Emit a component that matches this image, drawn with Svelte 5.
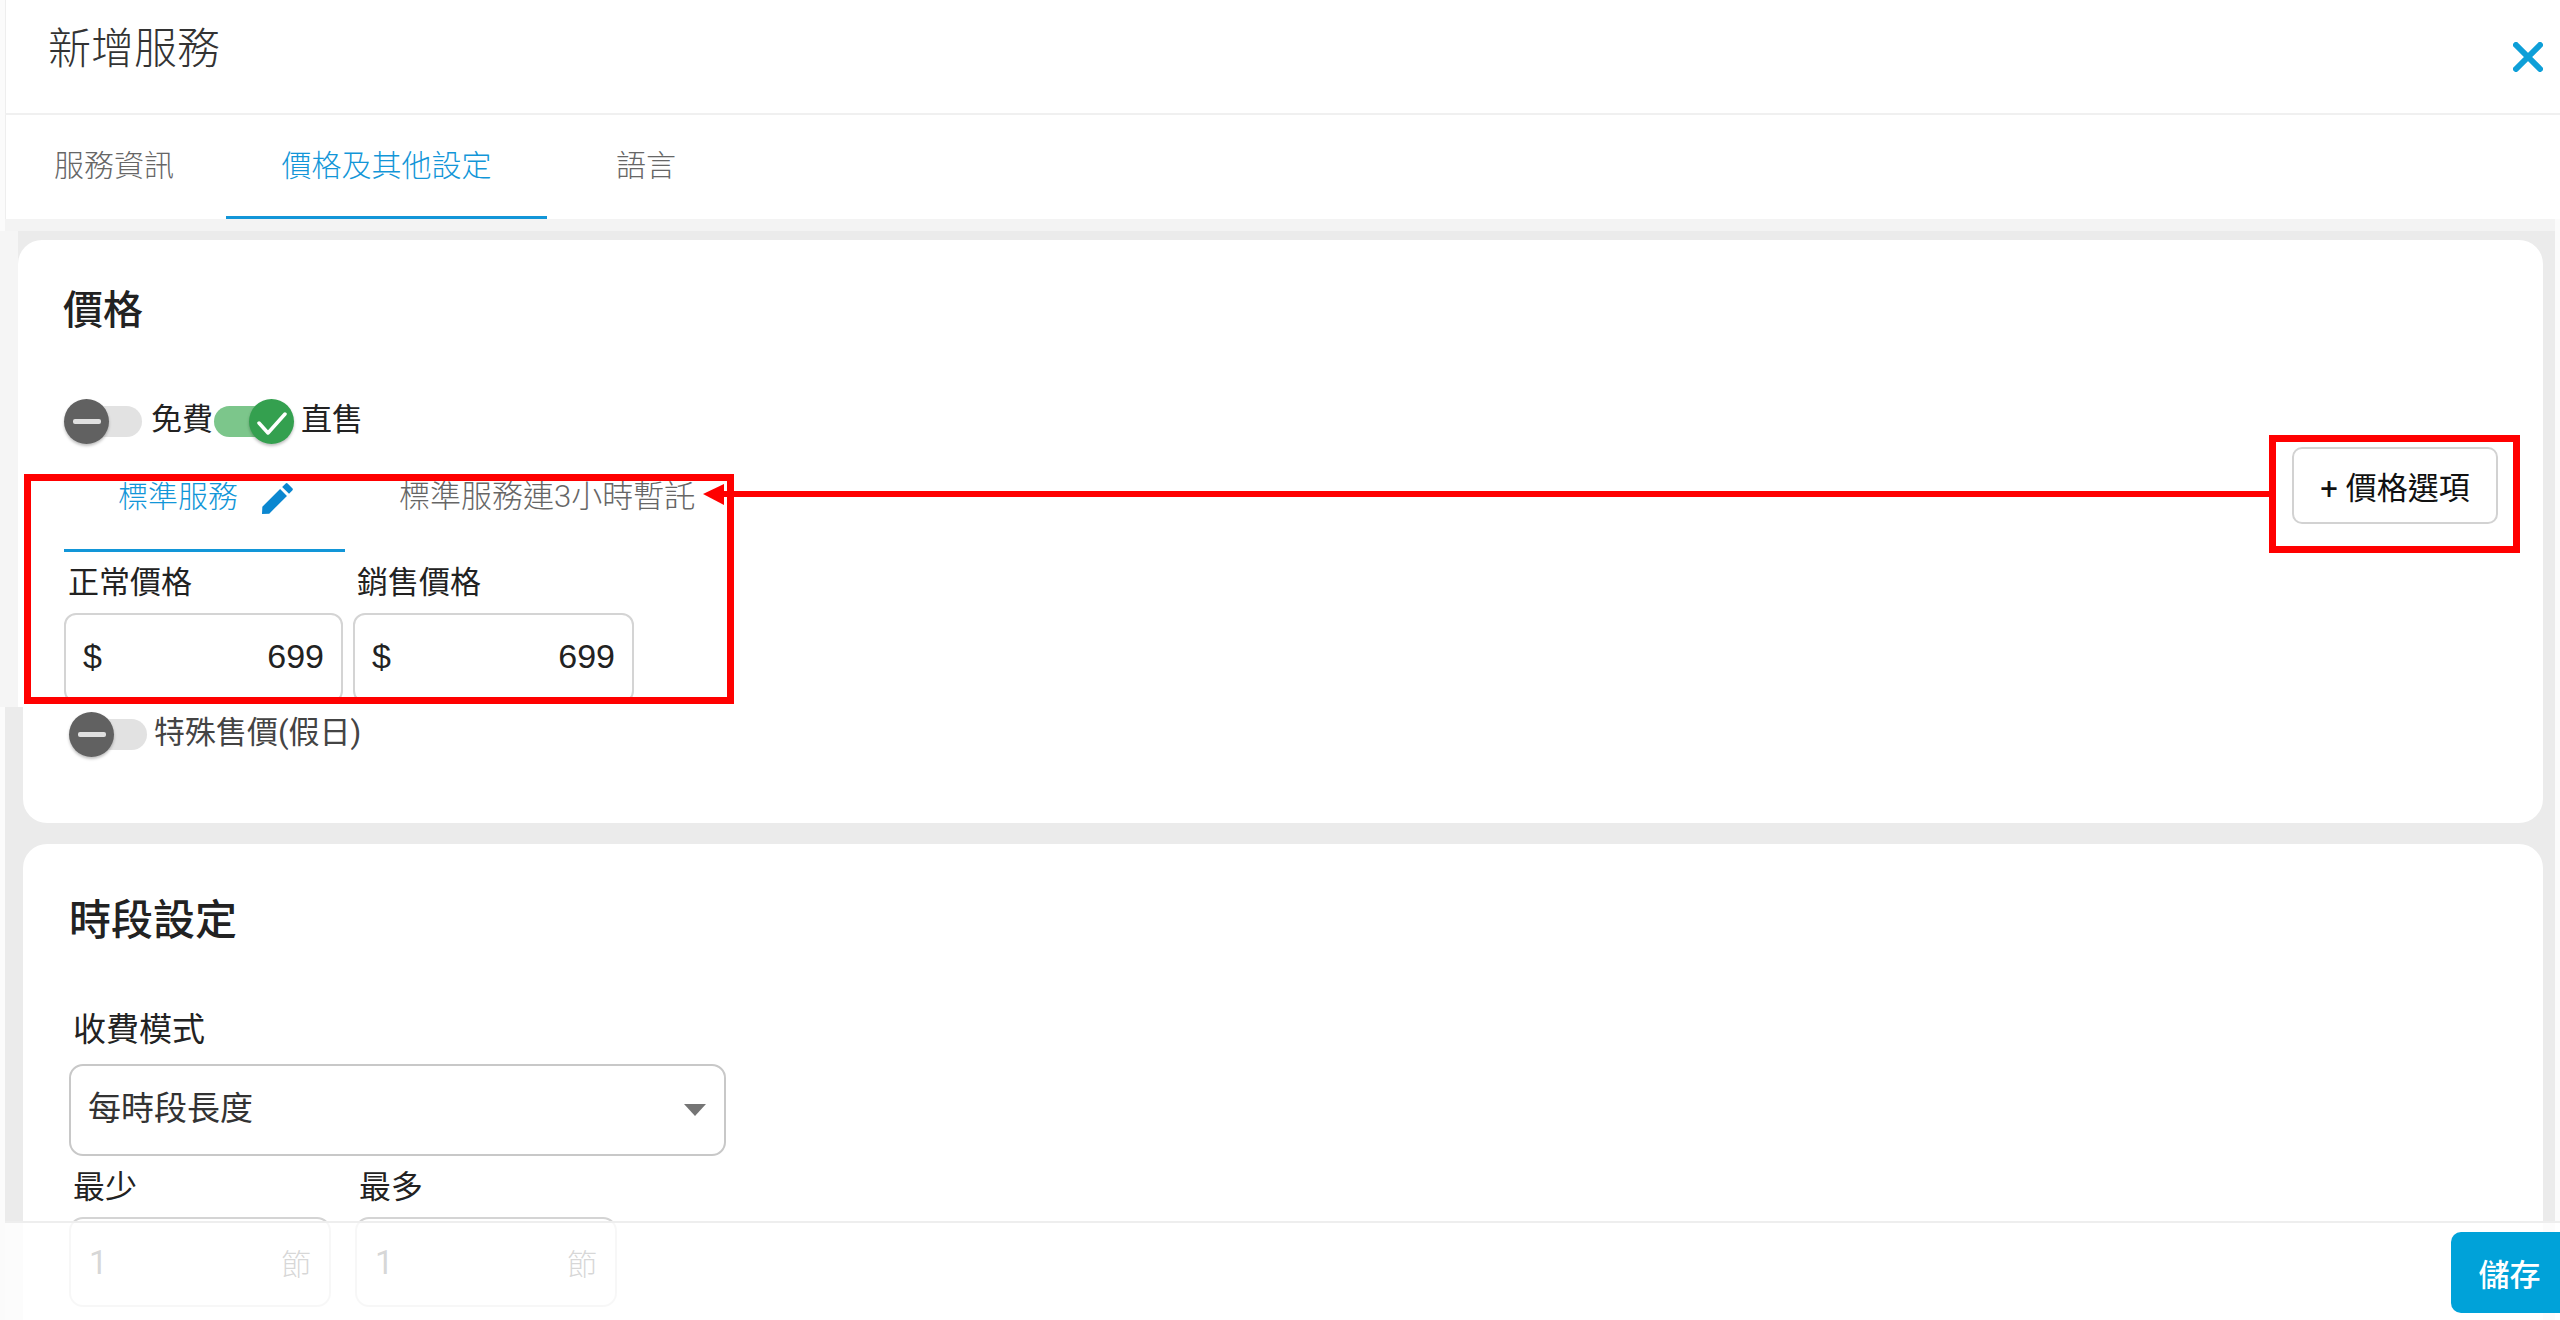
<script>
    const tabs = [
        { label: '服務資訊' },
        { label: '價格及其他設定', active: true },
        { label: '語言' }
    ];
    const prices = [
        { label: '正常價格', value: '699' },
        { label: '銷售價格', value: '699' }
    ];
    const limits = ['最少', '最多'];
</script>

{#snippet toggle(on)}
    <span class="toggle {on ? 'toggle-on' : 'toggle-off'}">
        <span class="track"></span>
        <span class="knob">
            {#if on}
                <svg viewBox="0 0 30 30" width="30" height="30" fill="none" stroke="#fff" stroke-width="3.5" stroke-linecap="round" stroke-linejoin="round">
                    <path d="M2 16l9 10L28 7" />
                </svg>
            {:else}
                <span class="minus"></span>
            {/if}
        </span>
    </span>
{/snippet}

<div class="page">
    <header class="header">
        <h1>新增服務</h1>
        <svg class="close" viewBox="0 0 30 30" width="30" height="30" fill="none" stroke="#0e9fd8" stroke-width="6" stroke-linecap="round">
            <path d="M3 3l24 24M27 3L3 27" />
        </svg>
    </header>

    <nav class="tabs">
        {#each tabs as tab}
            <span class="tab" class:active={tab.active}>{tab.label}</span>
        {/each}
    </nav>

    <main class="body">
        <section class="card price-card">
            <h2>價格</h2>
            <div class="toggle-row">
                {@render toggle(false)}
                <span class="toggle-label free">免費</span>
                {@render toggle(true)}
                <span class="toggle-label direct">直售</span>
            </div>

            <div class="price-tabs">
                <span class="price-tab active">
                    標準服務
                    <svg class="pencil" viewBox="3 3 18 18" width="31" height="31" fill="#0b87d0">
                        <path d="M3 21l.2-4.200L13.500 6.500l4 4L7.200 20.800 3 21zM14.700 5.300l1.900-1.900a1 1 0 0 1 1.400 0l2.600 2.600a1 1 0 0 1 0 1.400l-1.900 1.900-4-4z" />
                    </svg>
                </span>
                <span class="price-tab wide">標準服務連3小時暫託</span>
            </div>

            <div class="fields">
                {#each prices as price}
                    <div class="field">
                        <div class="field-label">{price.label}</div>
                        <div class="money-input">
                            <span>$</span>
                            <span>{price.value}</span>
                        </div>
                    </div>
                {/each}
            </div>

            <div class="toggle-row special">
                {@render toggle(false)}
                <span class="toggle-label holiday">特殊售價(假日)</span>
            </div>
        </section>

        <section class="card time-card">
            <h2>時段設定</h2>
            <div class="label-lg">收費模式</div>
            <div class="select">
                <span>每時段長度</span>
                <span class="caret"></span>
            </div>
            <div class="limits">
                {#each limits as limit}
                    <div class="limit">
                        <div class="label-lg">{limit}</div>
                        <div class="limit-input">
                            <span>1</span>
                            <span class="unit">節</span>
                        </div>
                    </div>
                {/each}
            </div>
        </section>
    </main>

    <footer class="footer">
        <button class="save">儲存</button>
    </footer>

    <button class="add-price">+ 價格選項</button>

    <!-- lighter strip of the pasted upper capture -->
    <div class="left-strip"></div>

    <!-- red annotation marks on top of the screenshot -->
    <div class="mark mark-tabs"></div>
    <div class="mark mark-button"></div>
    <svg class="arrow" width="2560" height="1320" viewBox="0 0 2560 1320">
        <rect x="722" y="491" width="1548" height="6" fill="#f00" />
        <polygon points="703,494 724,484 724,505" fill="#f00" />
    </svg>
</div>

<style>
    :global(body) {
        margin: 0;
        background: #fff;
    }

    .page {
        position: relative;
        width: 2560px;
        height: 1320px;
        overflow: hidden;
        padding-left: 5px;
        box-sizing: border-box;
        background: #fbfbfb;
        font-family: Roboto, "Noto Sans CJK TC", sans-serif;
        color: #222;
    }

    .header {
        height: 113px;
        display: flex;
        align-items: center;
        justify-content: space-between;
        padding: 0 17px 0 42px;
        background: #fff;
        border-bottom: 2px solid #f0f0f0;
        border-left: 1px solid #eeeeee;
    }

    h1 {
        margin: 0 0 13px;
        font-size: 43px;
        font-weight: 300;
        line-height: 1.2;
        color: #333;
    }

    .tabs {
        height: 104px;
        display: flex;
        background: #fff;
        padding-left: 15px;
        border-left: 1px solid #eeeeee;
    }

    .tab {
        height: 101px;
        display: flex;
        align-items: center;
        justify-content: center;
        font-size: 30px;
        font-weight: 300;
        color: #666;
        line-height: 1;
    }

    .tab:nth-child(1) {
        padding: 0 52px 0 33px;
    }

    .tab:nth-child(2) {
        width: 213px;
        padding: 0 54px;
    }

    .tab:nth-child(3) {
        padding-left: 69px;
    }

    .tab.active {
        color: #1296d8;
        border-bottom: 3px solid #1296d8;
    }

    .body {
        background: #ebebeb;
        border-top: 12px solid #f3f3f3;
        padding: 9px 12px 0 18px;
        margin-right: 5px;
        display: flex;
        flex-direction: column;
        gap: 21px;
    }

    .card {
        position: relative;
        background: #fff;
        border-radius: 24px;
    }

    .price-card {
        padding: 49px 41px 69px;
        height: 583px;
        box-sizing: border-box;
    }

    /* upper part of this card sits 5px further left in the capture */
    .price-card::before {
        content: "";
        position: absolute;
        left: -5px;
        top: 0;
        width: 29px;
        height: 467px;
        background: #fff;
        border-radius: 24px 0 0 0;
    }

    .left-strip {
        position: absolute;
        left: 0;
        top: 231px;
        width: 18px;
        height: 476px;
        background: #f5f5f5;
    }

    .time-card {
        padding: 55px 46px 0;
        height: 500px;
        box-sizing: border-box;
    }

    h2 {
        margin: 0;
        font-size: 40px;
        font-weight: 500;
        line-height: 44px;
        color: #222;
    }

    .price-card h2 {
        margin-left: -1px;
    }

    .toggle-row {
        display: flex;
        align-items: center;
        height: 45px;
        margin-top: 66px;
    }

    .toggle {
        position: relative;
        display: flex;
        align-items: center;
        height: 45px;
    }

    .toggle-off {
        width: 78px;
    }

    .toggle-on {
        width: 80px;
    }

    .track {
        display: block;
        height: 31px;
        border-radius: 16px;
    }

    .toggle-off .track {
        width: 65px;
        margin-left: 13px;
        background: #e2e2e2;
    }

    .toggle-on .track {
        width: 67px;
        background: #7cc68b;
    }

    .knob {
        position: absolute;
        top: 0;
        width: 45px;
        height: 45px;
        border-radius: 50%;
        display: flex;
        align-items: center;
        justify-content: center;
        box-shadow: 0 2px 3px rgba(0, 0, 0, 0.25);
    }

    .toggle-off .knob {
        left: 0;
        background: #616161;
    }

    .toggle-on .knob {
        right: 0;
        background: #34a04f;
    }

    .minus {
        width: 28px;
        height: 5px;
        border-radius: 2px;
        background: #e0e0e0;
    }

    .toggle-label {
        font-size: 31px;
        font-weight: 400;
        line-height: 36px;
        padding-bottom: 3px;
        color: #222;
    }

    .free {
        margin: 0 1px 0 9px;
    }

    .direct {
        margin-left: 7px;
    }

    .holiday {
        margin-left: 7px;
        color: #444;
    }

    .special {
        margin: 9px 0 0 5px;
    }

    .price-tabs {
        display: flex;
        margin-top: 27px;
        height: 81px;
    }

    .price-tab {
        padding: 10px 0 0 54px;
        font-size: 30px;
        font-weight: 300;
        line-height: 32px;
        color: #666;
        box-sizing: border-box;
        white-space: nowrap;
    }

    .price-tab.wide {
        font-size: 31px;
    }

    .price-tab.active {
        width: 281px;
        display: flex;
        align-items: flex-start;
        gap: 24px;
        color: #1296d8;
        border-bottom: 3px solid #1296d8;
    }

    .pencil {
        flex: none;
        margin-top: 2px;
    }

    .fields {
        display: flex;
        gap: 10px;
        margin-top: 13px;
    }

    .field-label {
        margin-left: 4px;
        font-size: 31px;
        line-height: 36px;
        color: #222;
    }

    .money-input {
        width: 279px;
        height: 90px;
        margin-top: 12px;
        box-sizing: border-box;
        border: 2px solid #d4d4d4;
        border-radius: 12px;
        padding: 0 17px 3px;
        display: flex;
        align-items: center;
        justify-content: space-between;
        font-family: "Liberation Sans", sans-serif;
        font-size: 34px;
        color: #222;
    }

    .field:nth-child(2) .money-input {
        width: 281px;
    }

    .label-lg {
        margin-left: 4px;
        font-size: 32px;
        line-height: 36px;
        color: #222;
    }

    .time-card h2 {
        margin-bottom: 69px;
        font-size: 42px;
    }

    .time-card > .label-lg {
        font-size: 33px;
    }

    .select {
        width: 657px;
        height: 92px;
        margin-top: 16px;
        box-sizing: border-box;
        border: 2px solid #c8c8c8;
        border-radius: 14px;
        padding: 0 18px 0 17px;
        display: flex;
        align-items: center;
        justify-content: space-between;
        font-size: 33px;
        line-height: 1;
        color: #333;
    }

    .select > span:first-child {
        padding-bottom: 4px;
    }

    .caret {
        width: 0;
        height: 0;
        border-left: 11px solid transparent;
        border-right: 11px solid transparent;
        border-top: 12px solid #757575;
    }

    .limits {
        display: flex;
        gap: 24px;
        margin-top: 13px;
    }

    .limit-input {
        width: 262px;
        height: 90px;
        margin-top: 12px;
        box-sizing: border-box;
        border: 2px solid #d4d4d4;
        border-radius: 14px;
        padding: 0 18px;
        display: flex;
        align-items: center;
        justify-content: space-between;
        font-size: 33px;
        color: #222;
    }

    .unit {
        font-size: 30px;
        font-weight: 300;
    }

    .footer {
        position: absolute;
        left: 5px;
        right: 0;
        top: 1221px;
        bottom: 0;
        border-top: 2px solid #eeeeee;
        background: rgba(255, 255, 255, 0.82);
        display: flex;
        justify-content: flex-end;
        align-items: flex-start;
        padding-top: 9px;
        box-sizing: border-box;
    }

    .save {
        width: 109px;
        height: 81px;
        border: 0;
        border-radius: 10px 0 0 10px;
        background: #00a2d9;
        color: #fff;
        font-family: inherit;
        font-size: 31px;
        font-weight: 500;
        padding: 0 0 0 8px;
    }

    .add-price {
        position: absolute;
        left: 2292px;
        top: 447px;
        width: 206px;
        height: 77px;
        border: 2px solid #d2d2d2;
        border-radius: 10px;
        background: #fff;
        color: #111;
        font-family: inherit;
        font-size: 31px;
        font-weight: 400;
        padding: 0;
    }

    .mark {
        position: absolute;
        box-sizing: border-box;
        border: 7px solid #f00;
    }

    .mark-tabs {
        left: 24px;
        top: 474px;
        width: 710px;
        height: 230px;
    }

    .mark-button {
        left: 2269px;
        top: 435px;
        width: 251px;
        height: 118px;
    }

    .arrow {
        position: absolute;
        left: 0;
        top: 0;
        pointer-events: none;
    }
</style>
